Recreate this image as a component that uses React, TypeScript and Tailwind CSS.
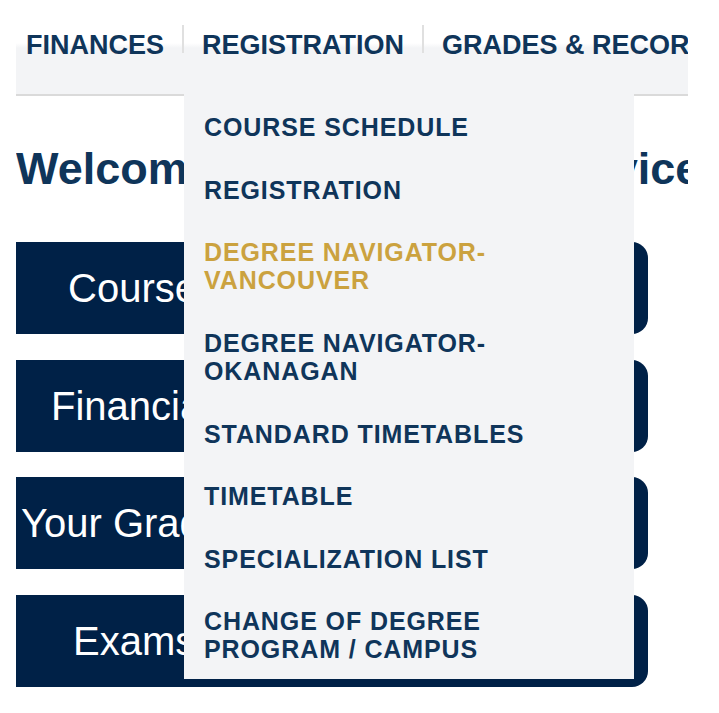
import React from "react";

const navItems = ["FINANCES", "REGISTRATION", "GRADES & RECORDS"];

const menu: { lines: string[]; active?: boolean }[] = [
  { lines: ["COURSE SCHEDULE"] },
  { lines: ["REGISTRATION"] },
  { lines: ["DEGREE NAVIGATOR-", "VANCOUVER"], active: true },
  { lines: ["DEGREE NAVIGATOR-", "OKANAGAN"] },
  { lines: ["STANDARD TIMETABLES"] },
  { lines: ["TIMETABLE"] },
  { lines: ["SPECIALIZATION LIST"] },
  { lines: ["CHANGE OF DEGREE", "PROGRAM / CAMPUS"] },
];

const buttons = [
  { label: "Courses & Registration", pad: "pl-[52px]" },
  { label: "Financial Information", pad: "pl-[35px]" },
  { label: "Your Grades & Records", pad: "pl-[5px]" },
  { label: "Exams & Graduation", pad: "pl-[57px]" },
];

export default function App() {
  return (
    <div className="min-h-[713px] w-full bg-white" style={{ fontFamily: '"Liberation Sans", Arial, sans-serif' }}>
      <div className="relative ml-[16px] w-[672px]">
        {/* Nav bar */}
        <nav className="h-[96px] overflow-hidden border-b-2 border-[#dadada] bg-[linear-gradient(to_bottom,#ffffff_43px,#f3f4f6_48px)]">
          <div className="flex items-start whitespace-nowrap pl-[10px] pt-[25px]">
            {navItems.map((item, i) => (
              <React.Fragment key={item}>
                {i > 0 && <div className="mx-[18px] h-[28px] w-[2px] shrink-0 bg-[#e0e0e0]" />}
                <span className="mt-[4px] text-[27px] font-bold leading-[32px] text-[#0f355a]">{item}</span>
              </React.Fragment>
            ))}
          </div>
        </nav>

        {/* Heading */}
        <h1 className="mt-[47px] overflow-hidden whitespace-nowrap text-[45px] font-bold leading-[52px] text-[#0f355a]">
          Welcome to the Student Service Centre
        </h1>

        {/* Buttons */}
        <div className="mt-[47px] flex w-[632px] flex-col gap-[25.6px]">
          {buttons.map((b) => (
            <div
              key={b.label}
              className={`flex h-[92px] items-center overflow-hidden whitespace-nowrap rounded-r-[16px] bg-[#002147] ${b.pad} text-[40px] leading-[46px] text-white`}
            >
              {b.label}
            </div>
          ))}
        </div>

        {/* Dropdown menu */}
        <div className="absolute left-[168px] top-[94px] h-[585px] w-[450px] overflow-hidden bg-[#f3f4f6] pt-[2px]">
          {menu.map((m) => (
            <div
              key={m.lines.join(" ")}
              className={`py-[17.3px] pl-[20px] text-[25px] font-bold leading-[28px] tracking-[0.9px] whitespace-nowrap ${
                m.active ? "text-[#cba23f]" : "text-[#0f355a]"
              }`}
            >
              {m.lines.map((l, i) => (
                <div key={i}>{l}</div>
              ))}
            </div>
          ))}
        </div>
      </div>
    </div>
  );
}
